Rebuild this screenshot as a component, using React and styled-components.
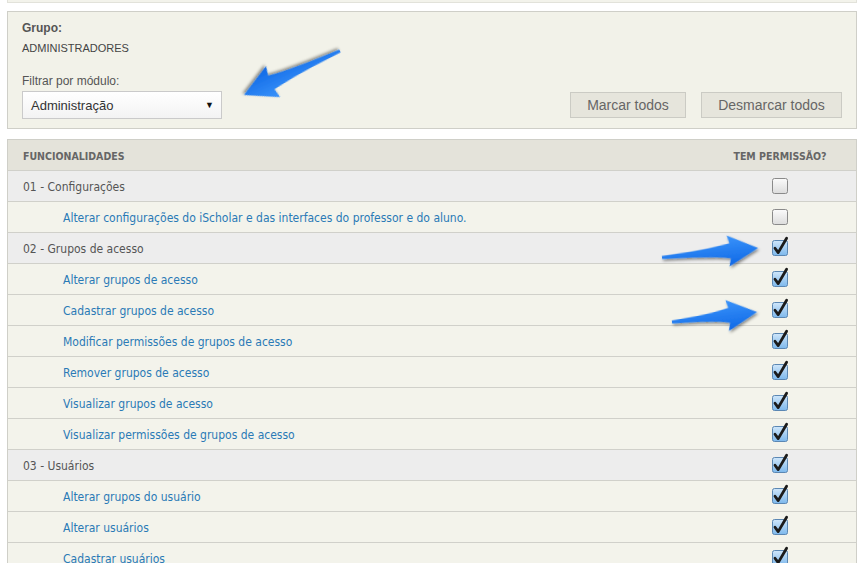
import React from "react";
import styled, { createGlobalStyle } from "styled-components";

const Global = createGlobalStyle`
  html, body { margin: 0; padding: 0; background: #fff; }
  body { font-family: "Liberation Sans", Arial, sans-serif; }
  #root { position: relative; }
`;

const Page = styled.div`
  position: relative;
  padding: 0 8px 0 7px;
  width: 850px;
`;

const TopStrip = styled.div`
  height: 2px;
  background: #f3f3eb;
  border: 1px solid #e2e2da;
  border-top: none;
`;

const Panel = styled.div`
  margin-top: 8px;
  background: #f2f2e9;
  border: 1px solid #cfcfc8;
  padding: 9px 14px 9px 14px;
  display: flex;
  flex-direction: column;
`;

const Label = styled.div`
  font-size: 12px;
  line-height: 14px;
  color: #555;
  font-weight: ${(p) => (p.$bold ? "bold" : "normal")};
`;

const Value = styled.div`
  font-size: 11px;
  line-height: 14px;
  color: #444;
  margin-top: 6px;
`;

const FilterRow = styled.div`
  margin-top: 19px;
  display: flex;
  justify-content: space-between;
  align-items: flex-end;
`;

const FilterCol = styled.div`
  display: flex;
  flex-direction: column;
  gap: 3px;
`;

const Select = styled.div`
  width: 200px;
  height: 28px;
  box-sizing: border-box;
  border: 1px solid #cacaca;
  background: linear-gradient(#ffffff, #f3f3f3);
  display: flex;
  align-items: center;
  justify-content: space-between;
  padding: 0 7px 0 8px;
  font-size: 13px;
  color: #333;
`;

const Caret = styled.span`
  font-size: 9px;
  color: #111;
`;

const Buttons = styled.div`
  display: flex;
  gap: 15px;
  margin-bottom: 1px;
`;

const Button = styled.div`
  height: 26px;
  box-sizing: border-box;
  padding: 0 15px;
  background: #e6e5dc;
  border: 1px solid #cbcbc4;
  color: #666;
  font-size: 14px;
  display: flex;
  align-items: center;
  justify-content: center;
  min-width: ${(p) => p.$w}px;
`;

const Table = styled.div`
  margin-top: 10px;
  border: 1px solid #cfcfc8;
  border-bottom: none;
`;

const Row = styled.div`
  display: grid;
  grid-template-columns: 1fr 152px;
  height: 30px;
  border-top: ${(p) => (p.$first ? "none" : "1px solid #d0d0ca")};
  background: ${(p) =>
    p.$kind === "head" ? "#e4e3da" : p.$kind === "group" ? "#ededed" : "#f3f3eb"};
  align-items: center;
`;

const Cell = styled.div`
  font-family: "DejaVu Sans Condensed", "Liberation Sans", sans-serif;
  font-size: ${(p) => (p.$head ? "10.5px" : "12px")};
  font-weight: ${(p) => (p.$head ? "bold" : "normal")};
  color: ${(p) => (p.$head ? "#666" : p.$link ? "#2a7ab6" : "#555")};
  padding-left: ${(p) => (p.$indent ? 55 : 15)}px;
  padding-top: ${(p) => (p.$head ? 1 : 2)}px;
  white-space: nowrap;
`;

const CheckCell = styled.div`
  display: flex;
  justify-content: center;
  font-family: "DejaVu Sans Condensed", "Liberation Sans", sans-serif;
  font-size: 10.5px;
  font-weight: bold;
  color: #666;
  padding-top: 1px;
`;

const Overlay = styled.svg`
  position: absolute;
  left: 0;
  top: 0;
  pointer-events: none;
`;

function Checkbox({ checked }) {
  return (
    <svg width="18" height="21" viewBox="0 0 18 21" style={{ marginTop: -4 }}>
      <defs>
        <linearGradient id="cbu" x1="0" y1="0" x2="0" y2="1">
          <stop offset="0" stopColor="#fbfbfb" />
          <stop offset="1" stopColor="#dcdcdc" />
        </linearGradient>
        <linearGradient id="cbc" x1="0" y1="0" x2="0" y2="1">
          <stop offset="0" stopColor="#cfe6fa" />
          <stop offset="1" stopColor="#7db8ec" />
        </linearGradient>
      </defs>
      <rect
        x="1.5"
        y="4.5"
        width="15"
        height="15"
        rx="2"
        fill={checked ? "url(#cbc)" : "url(#cbu)"}
        stroke={checked ? "#5b87b3" : "#8a8a8a"}
      />
      {checked && (
        <path
          d="M4 12.2 L7.2 16.6 L15.6 2.2"
          fill="none"
          stroke="#1b1b1b"
          strokeWidth="2.8"
          strokeLinecap="round"
          strokeLinejoin="round"
        />
      )}
    </svg>
  );
}

function Arrow({ tail, tip, head = 28, wide = 15.5 }) {
  const dx = tip[0] - tail[0];
  const dy = tip[1] - tail[1];
  const L = Math.sqrt(dx * dx + dy * dy);
  const a = (Math.atan2(dy, dx) * 180) / Math.PI;
  const h = L - head;
  const d = `M0,-1.6 Q${L * 0.45},-3 ${h},-7.5 L${h - 2},-${wide} L${L},0 L${h - 2},${wide} L${h},7.5 Q${L * 0.45},3 0,1.6 Z`;
  return (
    <g transform={`translate(${tail[0]} ${tail[1]}) rotate(${a})`} filter="url(#sh)">
      <path d={d} fill="url(#ag)" />
    </g>
  );
}

const rows = [
  { kind: "group", text: "01 - Configurações", checked: false },
  { kind: "item", text: "Alterar configurações do iScholar e das interfaces do professor e do aluno.", checked: false },
  { kind: "group", text: "02 - Grupos de acesso", checked: true },
  { kind: "item", text: "Alterar grupos de acesso", checked: true },
  { kind: "item", text: "Cadastrar grupos de acesso", checked: true },
  { kind: "item", text: "Modificar permissões de grupos de acesso", checked: true },
  { kind: "item", text: "Remover grupos de acesso", checked: true },
  { kind: "item", text: "Visualizar grupos de acesso", checked: true },
  { kind: "item", text: "Visualizar permissões de grupos de acesso", checked: true },
  { kind: "group", text: "03 - Usuários", checked: true },
  { kind: "item", text: "Alterar grupos do usuário", checked: true },
  { kind: "item", text: "Alterar usuários", checked: true },
  { kind: "item", text: "Cadastrar usuários", checked: true },
];

export default function App() {
  return (
    <>
      <Global />
      <Page>
        <TopStrip />
        <Panel>
          <Label $bold>Grupo:</Label>
          <Value>ADMINISTRADORES</Value>
          <FilterRow>
            <FilterCol>
              <Label>Filtrar por módulo:</Label>
              <Select>
                <span>Administração</span>
                <Caret>▼</Caret>
              </Select>
            </FilterCol>
            <Buttons>
              <Button $w={116}>Marcar todos</Button>
              <Button $w={141}>Desmarcar todos</Button>
            </Buttons>
          </FilterRow>
        </Panel>
        <Table>
          <Row $kind="head" $first>
            <Cell $head>FUNCIONALIDADES</Cell>
            <CheckCell>TEM PERMISSÃO?</CheckCell>
          </Row>
          {rows.map((r, i) => (
            <Row key={i} $kind={r.kind}>
              <Cell $indent={r.kind === "item"} $link={r.kind === "item"}>
                {r.text}
              </Cell>
              <CheckCell>
                <Checkbox checked={r.checked} />
              </CheckCell>
            </Row>
          ))}
        </Table>
      </Page>
      <Overlay width="865" height="563" viewBox="0 0 865 563">
        <defs>
          <linearGradient id="ag" x1="0" y1="0" x2="0" y2="1">
            <stop offset="0" stopColor="#3a93fa" />
            <stop offset="1" stopColor="#0f68e6" />
          </linearGradient>
          <filter id="sh" x="-20%" y="-50%" width="140%" height="200%">
            <feDropShadow dx="1" dy="2" stdDeviation="1.6" floodColor="#000" floodOpacity="0.45" />
          </filter>
        </defs>
        <Arrow tail={[340, 51]} tip={[244, 95]} head={30} wide={17} />
        <Arrow tail={[662, 257.5]} tip={[758, 248]} />
        <Arrow tail={[672, 322]} tip={[757, 312]} />
      </Overlay>
    </>
  );
}
